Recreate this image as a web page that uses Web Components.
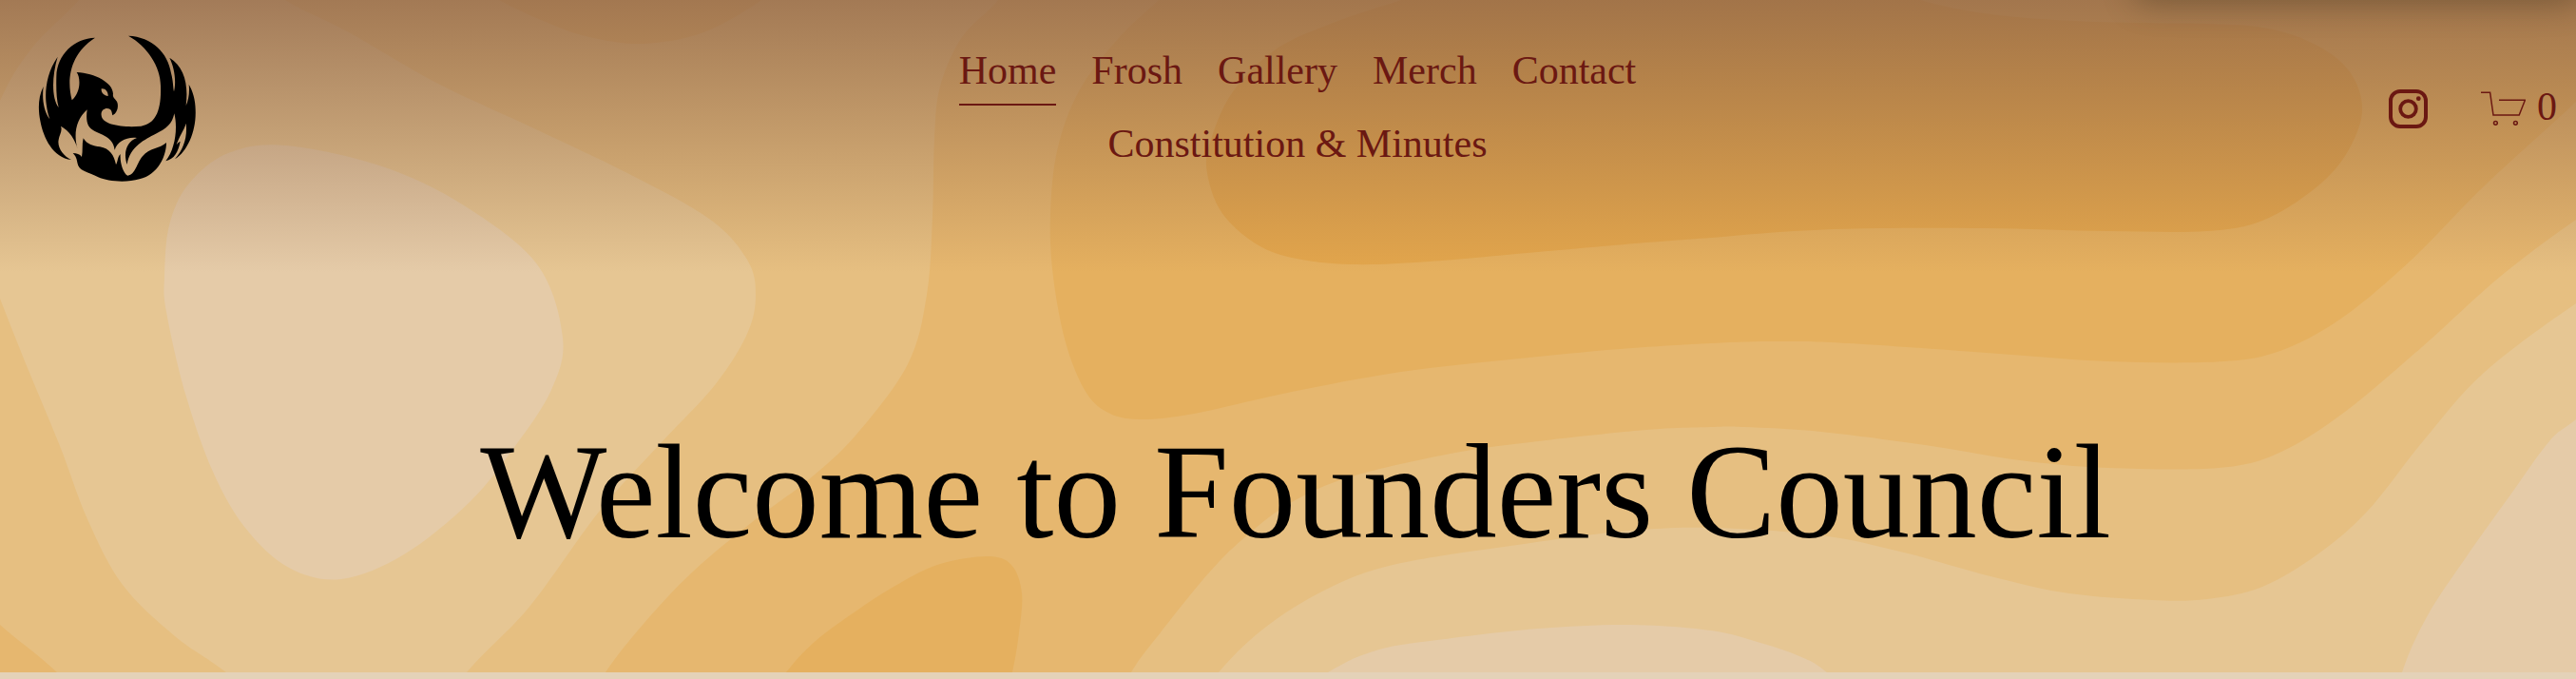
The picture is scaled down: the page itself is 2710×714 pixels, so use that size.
<!DOCTYPE html>
<html lang="en">
<head>
<meta charset="utf-8">
<meta name="viewport" content="width=device-width, initial-scale=1">
<title>Founders Council</title>
<style>
  body { margin: 0; background: #e4d2b8; font-family: "Liberation Serif", serif; }
</style>
</head>
<body>
<hero-section>
  <contour-art slot="art"></contour-art>
  <site-header>
    <phoenix-logo slot="logo"></phoenix-logo>
    <nav-link href="#home" current>Home</nav-link>
    <nav-link href="#frosh">Frosh</nav-link>
    <nav-link href="#gallery">Gallery</nav-link>
    <nav-link href="#merch">Merch</nav-link>
    <nav-link href="#contact">Contact</nav-link>
    <nav-link href="#constitution">Constitution &amp; Minutes</nav-link>
    <instagram-link slot="actions"></instagram-link>
    <cart-link slot="actions">0</cart-link>
  </site-header>
  <hero-title>Welcome to Founders Council</hero-title>
</hero-section>
<page-end></page-end>

<script>
const define = (name, html, setup) => {
  const template = document.createElement('template');
  template.innerHTML = html;
  customElements.define(name, class extends HTMLElement {
    constructor() {
      super();
      this.attachShadow({ mode: 'open' }).append(template.content.cloneNode(true));
    }
    connectedCallback() { if (setup) setup(this, this.shadowRoot); }
  });
};

define('hero-section', `
<style>
  :host { display: block; position: relative; overflow: hidden; background: #e6b76f; }
  .art { position: absolute; inset: 0; }
  .content { position: relative; }
  /* soft shade falling in from above the window's right end */
  .shade { position: absolute; bottom: 100%; right: 0; width: 17%; height: 40px;
           border-radius: 12px; box-shadow: 0 0 32px 4px rgba(70, 54, 30, .42); }
</style>
<div class="art"><slot name="art"></slot></div>
<div class="content"><slot></slot></div>
<div class="shade"></div>`);

define('page-end', `<style>:host { display: block; height: 7px; background: #e4d2b8; }</style>`);

define('hero-title', `
<style>
  :host { display: block; padding: 146px 0 106px 16px; text-align: center; }
  h1 { margin: 0; font-size: 141px; line-height: 168px; font-weight: 400; color: #000; }
</style>
<h1><slot></slot></h1>`);

define('site-header', `
<style>
  header { display: grid; grid-template-columns: 1fr minmax(0, 750px) 1fr; align-items: start;
           padding: 37px 20px 96px 40px;
           background: linear-gradient(rgba(144, 102, 72, .78), rgba(144, 102, 72, 0)); }
  nav { display: flex; flex-wrap: wrap; justify-content: center; gap: 2px 37px; }
  .actions { display: flex; justify-content: flex-end; align-items: center; gap: 56px; height: 154px; }
</style>
<header>
  <slot name="logo"></slot>
  <nav aria-label="Main"><slot></slot></nav>
  <div class="actions"><slot name="actions"></slot></div>
</header>`);

define('nav-link', `
<style>
  :host { display: block; }
  a { display: block; position: relative; font-size: 42px; line-height: 75px; color: #6b1812;
      text-decoration: none; white-space: nowrap; }
  :host([current]) a::after { content: ""; position: absolute; left: 0; right: 0; bottom: 1px;
      height: 2px; background: #6b1812; }
</style>
<a><slot></slot></a>`, (host, root) => {
  const a = root.querySelector('a');
  a.setAttribute('href', host.getAttribute('href'));
  if (host.hasAttribute('current')) a.setAttribute('aria-current', 'page');
});

define('instagram-link', `
<style>
  :host, a, svg { display: block; }
</style>
<a href="#instagram" aria-label="Instagram">
  <svg width="41" height="41" viewBox="0 0 41 41" fill="none" stroke="#6b1812">
    <rect x="2" y="2" width="37" height="37" rx="10" stroke-width="4"/>
    <circle cx="20.5" cy="20.5" r="8.3" stroke-width="3.8"/>
    <circle cx="31.3" cy="9.7" r="2.4" fill="#6b1812" stroke="none"/>
  </svg>
</a>`);

define('cart-link', `
<style>
  :host { display: block; }
  a { display: flex; align-items: center; gap: 12px; color: #6b1812; text-decoration: none;
      font-size: 42px; line-height: 42px; }
  span { padding-bottom: 4px; }
  svg { display: block; }
</style>
<a href="#cart" aria-label="Cart">
  <svg width="47" height="36" viewBox="0 0 47 36" fill="none" stroke="#6b1812">
    <path d="M0 1.2H9.6L13 25H40.2L46.4 9.2H19" stroke-width="1.5"/>
    <circle cx="15.4" cy="33.3" r="1.9" stroke-width="1.5"/>
    <circle cx="36.4" cy="33.3" r="1.9" stroke-width="1.5"/>
  </svg>
  <span><slot></slot></span>
</a>`);

define('phoenix-logo', `
<style>
  :host { display: block; }
  a { display: inline-block; vertical-align: top; }
  svg { display: block; }
</style>
<a href="#home" aria-label="Founders Council">
  <svg width="166" height="154" viewBox="60 50 498 462">
    <path fill-rule="evenodd" d="M240 58C175 60 120 110 118 180C117 220 118 250 125 278C103 250 103 180 122 118C90 165 82 215 85 258C88 285 92 300 97 315C78 290 72 250 77 212C60 245 60 285 67 320C77 375 108 437 165 443C140 432 120 405 125 380C127 365 138 352 132 337C158 350 178 380 185 410C172 365 178 318 215 285C212 305 213 325 219 335C235 365 296 358 302 412C310 385 340 370 372 374C340 385 328 420 341 458C350 400 400 378 430 362C465 345 484 330 490 297C502 345 492 410 463 447C490 440 502 420 509 385C503 388 499 392 497 396C505 370 521 350 527 328C532 370 520 410 492 441C533 415 560 350 557 285C557 255 548 225 536 205C539 230 535 255 527 272C535 205 522 150 475 121C490 150 497 195 489 228C486 215 487 195 480 170C470 105 420 55 345 52C405 85 447 150 447 210C450 290 430 330 385 337C335 342 262 335 260 303C257 285 275 276 288 284C294 290 293 297 295 303C308 297 314 280 311 265C307 250 294 250 297 235C297 200 240 170 182 167C195 185 195 230 167 255C150 190 160 110 240 58ZM260 219C272 216 282 228 281 242C268 240 259 232 260 219Z"/>
    <path d="M203 375C215 395 235 400 255 402C287 407 300 430 306 458C312 450 310 435 320 425C318 455 330 487 343 493C368 490 372 452 390 432C410 405 445 408 465 389C465 430 440 490 380 504C340 516 280 512 250 498C220 482 195 480 187 462C182 448 184 435 170 422C182 422 192 425 198 434C202 415 198 395 203 375Z"/>
  </svg>
</a>`);

/* Bands of the topographic backdrop, painted in order: [fill, outline points]. */
const BANDS = [
  ['#e6bf81', [[-60,-60],[1070,-40],[1050,0],[1012,39],[989,91],[983,146],[981,228],[975,310],[955,383],[900,458],[850,505],[795,546],[729,601],[677,656],[637,707],[600,770],[120,770],[60,707],[0,657],[-60,600]]],
  ['#e6b76f', [[480,-30],[525,0],[574,23],[620,39],[677,46],[740,34],[801,0],[830,-30]]],
  ['#e6c693', [[120,-50],[230,-50],[300,0],[367,34],[459,87],[551,130],[660,182],[746,230],[786,273],[795,310],[786,351],[752,405],[697,464],[631,537],[557,638],[491,707],[440,780],[330,780],[238,707],[184,669],[129,615],[92,546],[63,469],[29,387],[0,314],[-40,210],[0,106],[34,50],[83,0]]],
  ['#e5cba8', [[173,291],[178,237],[198,194],[240,161],[301,153],[402,175],[488,216],[565,278],[592,355],[580,410],[542,469],[494,528],[425,583],[359,609],[304,597],[258,555],[224,496],[195,414],[175,328]]],
  ['#e5b05f', [[780,770],[827,707],[858,674],[900,643],[940,617],[986,594],[1038,585],[1064,594],[1075,624],[1072,665],[1065,707],[1050,770]]],
  ['#e5b05f', [[1260,-40],[1219,0],[1176,41],[1135,96],[1112,159],[1105,228],[1108,291],[1121,360],[1141,410],[1164,433],[1198,441],[1256,435],[1359,412],[1474,391],[1589,378],[1704,367],[1800,361],[1870,359],[1945,361],[2090,371],[2218,380],[2340,380],[2404,367],[2467,332],[2537,273],[2613,196],[2710,107],[2790,30],[2790,-60]]],
  ['#e3a64c', [[1560,-30],[1474,0],[1405,23],[1342,52],[1296,98],[1273,150],[1270,182],[1285,223],[1319,255],[1359,271],[1422,278],[1503,275],[1618,265],[1732,255],[1800,250],[1887,243],[1974,240],[2090,240],[2218,243],[2322,243],[2380,232],[2433,200],[2467,164],[2485,118],[2473,77],[2438,48],[2386,30],[2322,25],[2206,23],[2102,16],[2020,0],[1940,-30]]],
  ['#e6bf81', [[1150,780],[1190,707],[1221,665],[1273,601],[1313,562],[1359,528],[1422,501],[1531,476],[1618,464],[1732,452],[1800,449],[1835,449],[1916,454],[2032,469],[2125,484],[2218,492],[2334,492],[2398,476],[2467,433],[2549,364],[2630,291],[2710,231],[2790,180],[2790,780]]],
  ['#e6c693', [[1230,780],[1282,707],[1336,656],[1405,615],[1474,592],[1589,574],[1704,559],[1800,555],[1916,563],[2003,581],[2102,608],[2177,624],[2264,631],[2322,630],[2380,617],[2438,583],[2491,537],[2549,464],[2613,392],[2710,319],[2790,270],[2790,780]]],
  ['#e5cba8', [[1320,760],[1397,707],[1451,683],[1520,672],[1618,661],[1715,657],[1800,663],[1852,676],[1893,690],[1922,707],[1980,760]]],
  ['#e5cba8', [[2510,780],[2527,707],[2554,647],[2595,585],[2642,519],[2682,464],[2710,441],[2790,380],[2790,780]]],
];

/* Closed Catmull-Rom spline through the points, as cubic segments. */
const spline = pts => {
  const n = pts.length, at = i => pts[(i + n) % n];
  let d = 'M' + pts[0];
  for (let i = 0; i < n; i++) {
    const [a, b, c, e] = [at(i - 1), at(i), at(i + 1), at(i + 2)];
    d += `C${b[0] + (c[0] - a[0]) / 6} ${b[1] + (c[1] - a[1]) / 6} ${c[0] - (e[0] - b[0]) / 6} ${c[1] - (e[1] - b[1]) / 6} ${c[0]} ${c[1]}`;
  }
  return d + 'Z';
};

define('contour-art', `
<style>
  :host, svg { display: block; width: 100%; height: 100%; }
</style>
<svg viewBox="0 0 2710 707" preserveAspectRatio="xMidYMid slice" aria-hidden="true"></svg>`,
(host, root) => {
  root.querySelector('svg').innerHTML =
    BANDS.map(([fill, pts]) => `<path fill="${fill}" d="${spline(pts)}"/>`).join('');
});
</script>
</body>
</html>
